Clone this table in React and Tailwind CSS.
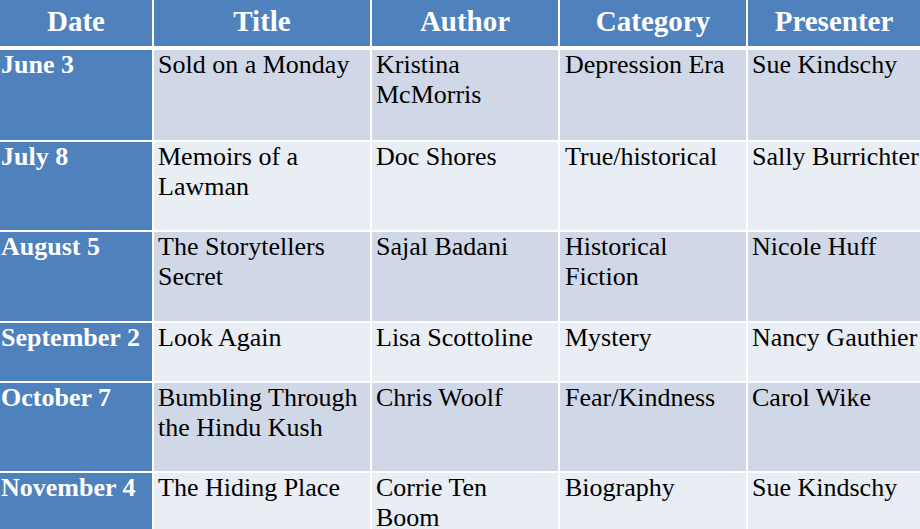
// book club schedule table

import React from 'react';

const rows = [
  { date: 'June 3', title: ['Sold on a Monday'], author: ['Kristina', 'McMorris'], category: ['Depression Era'], presenter: 'Sue Kindschy', h: 'h-[90px]' },
  { date: 'July 8', title: ['Memoirs of a', 'Lawman'], author: ['Doc Shores'], category: ['True/historical'], presenter: 'Sally Burrichter', h: 'h-[88px]' },
  { date: 'August 5', title: ['The Storytellers', 'Secret'], author: ['Sajal Badani'], category: ['Historical', 'Fiction'], presenter: 'Nicole Huff', h: 'h-[89px]' },
  { date: 'September 2', title: ['Look Again'], author: ['Lisa Scottoline'], category: ['Mystery'], presenter: 'Nancy Gauthier', h: 'h-[58px]' },
  { date: 'October 7', title: ['Bumbling Through', 'the Hindu Kush'], author: ['Chris Woolf'], category: ['Fear/Kindness'], presenter: 'Carol Wike', h: 'h-[88px]' },
  { date: 'November 4', title: ['The Hiding Place'], author: ['Corrie Ten', 'Boom'], category: ['Biography'], presenter: 'Sue Kindschy', h: 'h-[90px]' },
];

const Lines = ({ lines }) =>
  lines.map((l, i) => (
    <React.Fragment key={i}>
      {l}
      {i < lines.length - 1 && <br />}
    </React.Fragment>
  ));

const App = () => {
  return (
    <div
      className="w-[920px] h-[529px] overflow-hidden bg-white flex flex-col"
      style={{ fontFamily: '"Liberation Serif", "Times New Roman", serif' }}
    >
      {/* Header */}
      <div className="grid grid-cols-[152px_216px_186px_186px_1fr] gap-x-[2px] h-[46px] shrink-0 mb-[4px]">
        {['Date', 'Title', 'Author', 'Category', 'Presenter'].map((t) => (
          <div key={t} className="bg-[#4f81bd] text-white font-bold text-[29px] leading-[42px] text-center">
            {t}
          </div>
        ))}
      </div>

      {/* Body rows */}
      <div className="flex flex-col gap-y-[2px]">
        {rows.map((r, i) => {
          const cell = i % 2 === 0 ? 'bg-[#d0d8e8]' : 'bg-[#e9edf4]';
          return (
            <div key={r.date} className={`grid grid-cols-[152px_216px_186px_186px_1fr] gap-x-[2px] shrink-0 ${r.h}`}>
              <div className="bg-[#4f81bd] text-white font-bold text-[26px] leading-[30px] pl-[1px] whitespace-nowrap">
                {r.date}
              </div>
              <div className={`${cell} text-black text-[26px] leading-[30px] pl-[4px] whitespace-nowrap`}>
                <Lines lines={r.title} />
              </div>
              <div className={`${cell} text-black text-[26px] leading-[30px] pl-[4px] whitespace-nowrap`}>
                <Lines lines={r.author} />
              </div>
              <div className={`${cell} text-black text-[26px] leading-[30px] pl-[5px] whitespace-nowrap`}>
                <Lines lines={r.category} />
              </div>
              <div className={`${cell} text-black text-[26px] leading-[30px] pl-[4px] whitespace-nowrap`}>
                {r.presenter}
              </div>
            </div>
          );
        })}
      </div>
    </div>
  );
};

export default App;
